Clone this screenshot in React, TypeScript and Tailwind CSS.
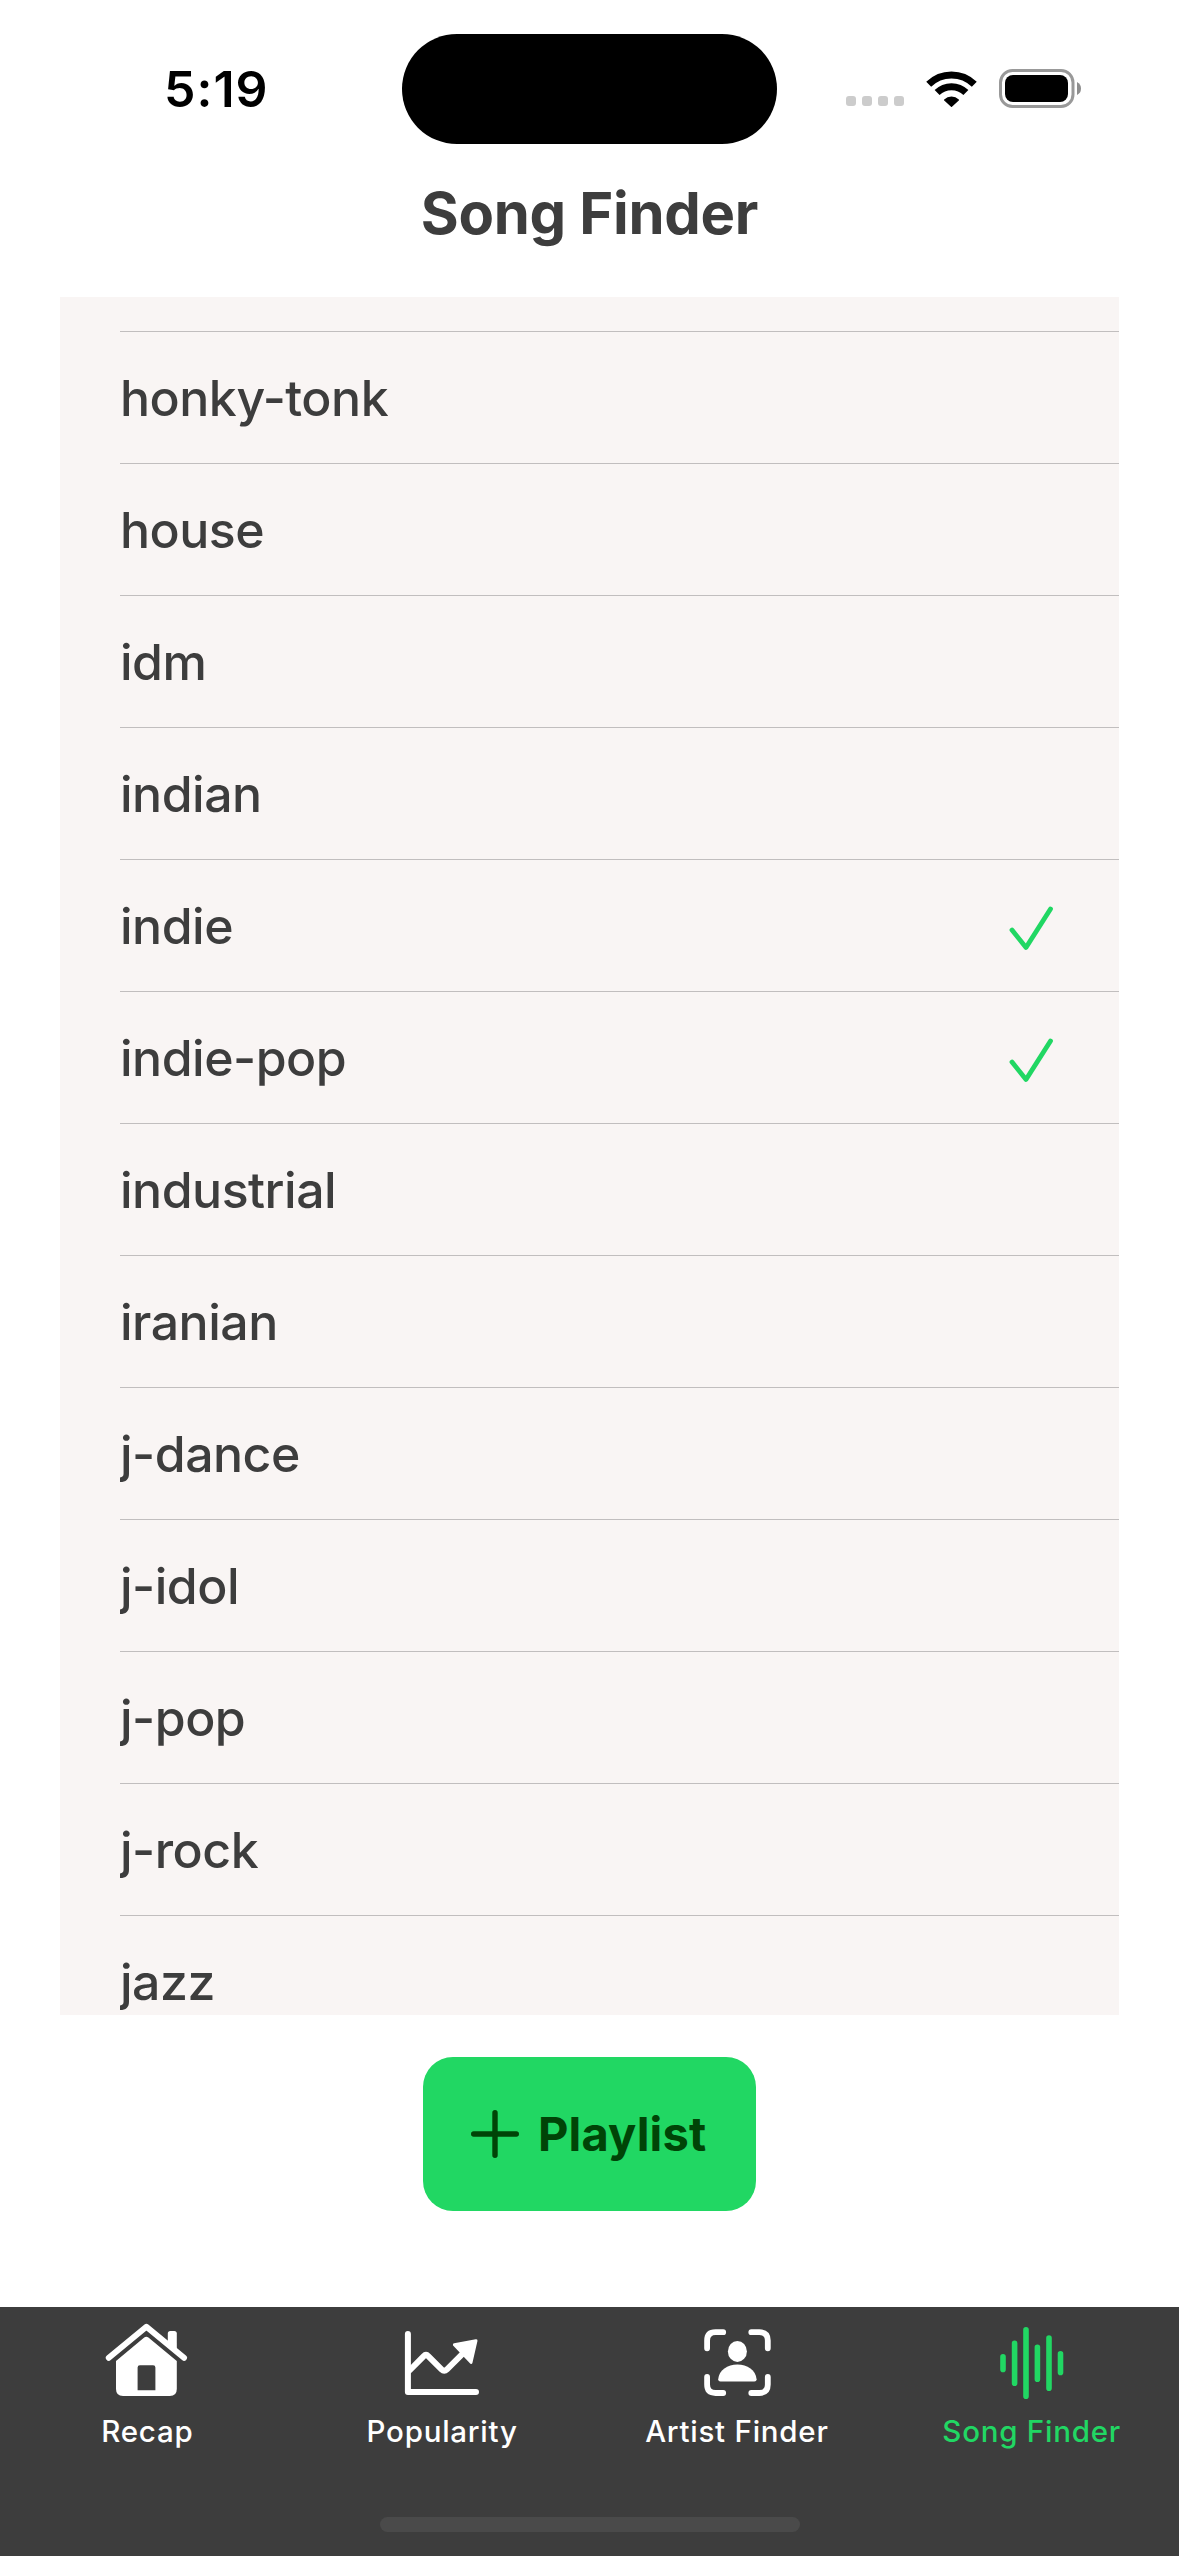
import type { ReactNode } from 'react';

const GENRES = [
  'honky-tonk', 'house', 'idm', 'indian', 'indie', 'indie-pop', 'industrial',
  'iranian', 'j-dance', 'j-idol', 'j-pop', 'j-rock', 'jazz',
];
const SELECTED = new Set(['indie', 'indie-pop']);

function StatusBar() {
  return (
    <div className="relative flex h-[177px] shrink-0 items-center justify-between pl-[164px] pr-[97px]">
      <span className="text-[50px] leading-[60px] font-semibold tracking-[1px] text-black">5:19</span>
      <div className="absolute top-[34px] left-[402px] h-[110px] w-[375px] rounded-full bg-black" />
      <div className="flex items-center">
        <div className="mt-[25px] flex gap-[6px]">
          <i className="size-[10px] rounded-[3px] bg-[#cccccc]" />
          <i className="size-[10px] rounded-[3px] bg-[#cccccc]" />
          <i className="size-[10px] rounded-[3px] bg-[#cccccc]" />
          <i className="size-[10px] rounded-[3px] bg-[#cccccc]" />
        </div>
        <svg className="ml-[21px] h-[38px] w-[53px]" viewBox="-26.5 -37 53 38" fill="none" stroke="black" strokeWidth="7">
          <path d="M-22.8 -22.8A32.6 32.6 0 0 1 22.8 -22.8" />
          <path d="M-14.4 -14.4A20.4 20.4 0 0 1 14.4 -14.4" />
          <path d="M-6.8 -7A9.7 9.7 0 0 1 6.8 -7L0 -0.7Z" fill="black" stroke="black" strokeWidth="1.4" strokeLinejoin="round" />
        </svg>
        <svg className="ml-[21px] h-[40px] w-[83px]" viewBox="0 0 83 40">
          <rect x="1.5" y="1.5" width="72.5" height="36" rx="12" fill="none" stroke="#999" strokeWidth="3" />
          <rect x="6" y="6" width="63" height="27" rx="8" fill="black" />
          <path d="M78 13Q82 15 82 19.5T78 26Z" fill="#8e8e8e" />
        </svg>
      </div>
    </div>
  );
}

function GenreRow({ name }: { name: string }) {
  return (
    <li className="flex h-[132px] shrink-0 items-center justify-between border-b border-[#c1bebe] pr-[60px]">
      <span className="overflow-hidden text-[50px] leading-[64px] font-medium tracking-[-0.5px]">{name}</span>
      {SELECTED.has(name) && (
        <svg className="size-[56px]" viewBox="0 0 56 56" fill="none" stroke="#21d763" strokeWidth="4.8" strokeLinecap="round" strokeLinejoin="round">
          <path d="M9 32L23 49.5L47.5 11" />
        </svg>
      )}
    </li>
  );
}

function Tab({ label, active, children }: { label: string; active?: boolean; children: ReactNode }) {
  return (
    <div className={active ? 'flex flex-1 flex-col items-center pt-[10px] text-[#21d763]' : 'flex flex-1 flex-col items-center pt-[10px] text-white'}>
      {children}
      <span className="mt-[4px] text-[29.5px] leading-[40px] font-medium tracking-[0.75px] whitespace-nowrap">{label}</span>
    </div>
  );
}

function HomeIcon() {
  return (
    <svg className="size-[90px]" viewBox="0 0 90 90" fill="currentColor">
      <path d="M6.8 40.8L44.4 9.8L82 40.8" fill="none" stroke="currentColor" strokeWidth="6" strokeLinecap="round" strokeLinejoin="round" />
      <path d="M65.8 26V16.5Q65.8 14 68.3 14H72.3Q74.8 14 74.8 16.5V34Z" />
      <path fillRule="evenodd" d="M42.2 20.6Q44.3 19 46.4 20.6L74.8 44V72Q74.8 79 67.8 79H21Q14 79 14 72V44ZM35.6 50.5V73.3H53.4V50.5Q53.4 48.2 51.1 48.2H37.9Q35.6 48.2 35.6 50.5Z" />
    </svg>
  );
}

function ChartIcon() {
  return (
    <svg className="size-[90px]" viewBox="0 0 90 90" fill="none" stroke="currentColor" strokeWidth="6" strokeLinecap="round" strokeLinejoin="round">
      <path d="M10.9 17V75H79" />
      <path d="M12.5 53.5L26.5 39.3Q29 36.8 31.5 39.3L44.5 52.3Q47.2 55 50 52.3L67 35.3" />
      <path d="M79 23.7L57.4 27.7L74 45.3Z" fill="currentColor" strokeWidth="3" />
    </svg>
  );
}

function PersonFrameIcon() {
  return (
    <svg className="size-[90px]" viewBox="0 0 90 90" fill="none" stroke="currentColor" strokeWidth="5.8" strokeLinecap="round">
      <path d="M31.2 15.2H23.5Q15.1 15.2 15.1 23.6V31.3" />
      <path d="M59.3 15.2H67.4Q75.8 15.2 75.8 23.6V31.3" />
      <path d="M31.2 76H23.5Q15.1 76 15.1 67.6V60" />
      <path d="M59.3 76H67.4Q75.8 76 75.8 67.6V60" />
      <ellipse cx="45.4" cy="34.4" rx="9.5" ry="10.5" fill="currentColor" stroke="none" />
      <path d="M26.2 62.2C27 53 35.5 47.5 45.4 47.5S63.8 53 64.6 62.2Q64.6 64.6 62.4 64.6H28.4Q26.2 64.6 26.2 62.2Z" fill="currentColor" stroke="none" />
    </svg>
  );
}

function WaveIcon() {
  return (
    <svg className="size-[90px]" viewBox="0 0 90 90" fill="none" stroke="currentColor" strokeWidth="5.6" strokeLinecap="round">
      <path d="M16 39.8V52.4M27.6 26.2V66.2M39 12.8V79.2M50.4 30.2V62.2M62 21V71.2M73.5 36.8V55.4" />
    </svg>
  );
}

export default function App() {
  return (
    <div className="flex h-[2556px] w-[1179px] flex-col overflow-hidden bg-white font-['Inter',sans-serif] text-[#3d3d3d]">
      <StatusBar />
      <h1 className="h-[120px] shrink-0 text-center text-[58px] leading-[72px] font-bold tracking-[-0.3px]">Song Finder</h1>
      <ul className="mx-[60px] flex h-[1718px] shrink-0 flex-col overflow-hidden bg-[#f9f5f4] pl-[60px]">
        <li className="h-[35px] shrink-0 border-b border-[#c1bebe]" />
        {GENRES.map((name) => (
          <GenreRow key={name} name={name} />
        ))}
      </ul>
      <div className="flex grow items-start justify-center pt-[42px]">
        <button className="flex h-[154px] w-[333px] items-center rounded-[30px] bg-[#21d763] pl-[48px] text-[#004407]">
          <svg className="size-[48px]" viewBox="0 0 48 48" stroke="currentColor" strokeWidth="5.4" strokeLinecap="round">
            <path d="M24 2.7V45.3M2.7 24H45.3" />
          </svg>
          <span className="ml-[19px] text-[47px] leading-[56px] font-bold tracking-[0.15px]">Playlist</span>
        </button>
      </div>
      <nav className="flex h-[249px] shrink-0 flex-col justify-between bg-[#3d3d3d]">
        <div className="flex">
          <Tab label="Recap"><HomeIcon /></Tab>
          <Tab label="Popularity"><ChartIcon /></Tab>
          <Tab label="Artist Finder"><PersonFrameIcon /></Tab>
          <Tab label="Song Finder" active><WaveIcon /></Tab>
        </div>
        <div className="mb-[24px] h-[15px] w-[420px] self-center rounded-full bg-[#4a4a4a]" />
      </nav>
    </div>
  );
}
